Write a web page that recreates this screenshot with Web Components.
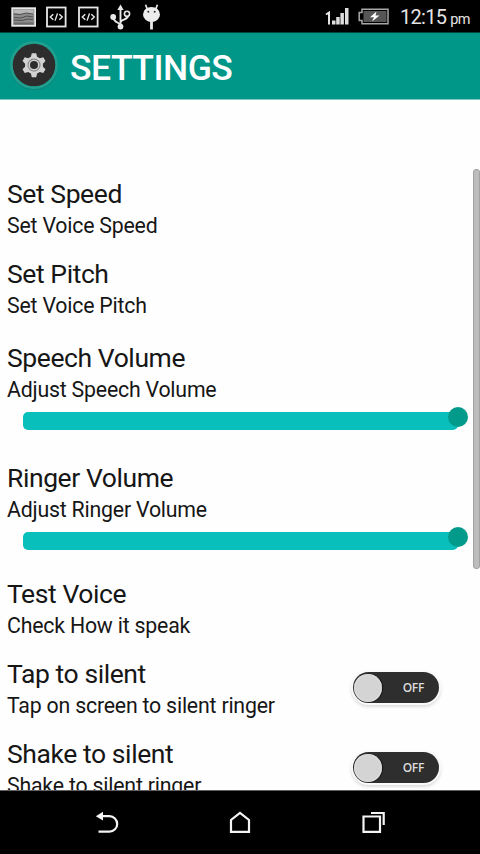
<!DOCTYPE html>
<html lang="en">
<head>
<meta charset="utf-8">
<title>Settings</title>
<style>
  body { margin: 0; background: #fff; font-family: Roboto, "Liberation Sans", sans-serif; }
</style>
</head>
<body>
<phone-screen>
  <status-bar slot="top"></status-bar>
  <title-bar slot="top">SETTINGS</title-bar>

  <setting-row><span slot="title">Set Speed</span>Set Voice Speed</setting-row>
  <setting-row class="before-slider"><span slot="title">Set Pitch</span>Set Voice Pitch</setting-row>
  <setting-row><span slot="title">Speech Volume</span>Adjust Speech Volume<volume-slider slot="below"></volume-slider></setting-row>
  <setting-row class="last-slider"><span slot="title">Ringer Volume</span>Adjust Ringer Volume<volume-slider slot="below"></volume-slider></setting-row>
  <setting-row><span slot="title">Test Voice</span>Check How it speak</setting-row>
  <setting-row><span slot="title">Tap to silent</span>Tap on screen to silent ringer<toggle-switch slot="control">OFF</toggle-switch></setting-row>
  <setting-row><span slot="title">Shake to silent</span>Shake to silent ringer<toggle-switch slot="control">OFF</toggle-switch></setting-row>

  <nav-bar slot="bottom"></nav-bar>
</phone-screen>

<script>
class PhoneScreen extends HTMLElement {
    constructor() {
        super();
        const shadowRoot = this.attachShadow({mode: 'open'});
        shadowRoot.innerHTML = `
            <style>
              :host { display: flex; flex-direction: column; width: 480px; height: 854px; overflow: hidden; background: #fefefe; }
              main { flex: 1; min-height: 0; display: flex; overflow: hidden; box-sizing: border-box; border-bottom: 1px solid #606060; }
              .list { width: 473px; padding-top: 77px; height: 700px; }
              .scroll { width: 5px; height: 398px; margin-top: 69px; border: 1px solid #a2a2a2; border-radius: 3px; background: #bdbdbd; }
              ::slotted(.before-slider) { margin-bottom: 4px; }
              ::slotted(.last-slider) { margin-bottom: -4px; }
            </style>
            <slot name="top"></slot>
            <main>
              <div class="list"><slot></slot></div>
              <div class="scroll"></div>
            </main>
            <slot name="bottom"></slot>`;
    }
}

class StatusBar extends HTMLElement {
    constructor() {
        super();
        const shadowRoot = this.attachShadow({mode: 'open'});
        shadowRoot.innerHTML = `
            <style>
              :host { display: flex; justify-content: space-between; height: 33px; box-sizing: border-box; background: #000; color: #e4e4e4; border-bottom: 1px solid #00453f; }
              svg { display: block; }
              .icons { display: flex; align-items: center; gap: 10px; padding: 1px 0 0 11px; }
              .state { display: flex; align-items: center; padding-right: 10px; }
              .time { font-size: 20px; line-height: 33px; letter-spacing: -.7px; padding: 4px 0 0 9px; white-space: nowrap; }
              .time small { font-size: 14.5px; letter-spacing: -.6px; margin-left: 4px; }
            </style>
            <div class="icons">
              <svg width="25" height="22" viewBox="0 0 25 22">
                <rect x="1.2" y="2.2" width="23" height="17.6" fill="#8c8c8c" stroke="#e8e8e8" stroke-width="1.8"/>
                <path d="M2.5 3.5h20v4.5l-7-1-6 1-7-1z" fill="#b8b8b8"/>
                <path d="M3 8l6 .5 6-1.500 7 1M3 11.500l7 .5 6-2 6 1M3 14l8 .5 6-1.500 5 .5" fill="none" stroke="#3c3c3c" stroke-width=".8"/>
                <path d="M3 17.500h19.500" stroke="#6a6a6a" stroke-width="2"/>
              </svg>
              <svg width="21" height="22" viewBox="0 0 21 22">
                <rect x="1" y="1.500" width="18.600" height="19" fill="none" stroke="#e8e8e8" stroke-width="1.800"/>
                <path d="M7.300 8.200L4.300 11l3 2.800M13.300 8.200l3 2.800-3 2.800M11.500 7.400l-2.400 7.200" fill="none" stroke="#e8e8e8" stroke-width="1.400"/>
              </svg>
              <svg width="21" height="22" viewBox="0 0 21 22" style="margin-left:1px">
                <rect x="1" y="1.500" width="18.600" height="19" fill="none" stroke="#e8e8e8" stroke-width="1.800"/>
                <path d="M7.300 8.200L4.300 11l3 2.800M13.300 8.200l3 2.800-3 2.800M11.500 7.400l-2.400 7.200" fill="none" stroke="#e8e8e8" stroke-width="1.400"/>
              </svg>
              <svg width="22" height="26" viewBox="0 0 22 26" style="margin-left:1px">
                <path d="M10.500 4v18M10.500 22c0-4-7-3-7-8.500M10.500 18.500c0-3.500 8-2.500 7.500-7" fill="none" stroke="#e8e8e8" stroke-width="1.900"/>
                <path d="M10.500 .5l3.200 5.500H7.300z" fill="#e8e8e8"/>
                <circle cx="10.500" cy="22.600" r="2.900" fill="#e8e8e8"/>
                <circle cx="3.200" cy="13" r="2.900" fill="#e8e8e8"/>
                <circle cx="17" cy="9.800" r="2.600" fill="#000" stroke="#e8e8e8" stroke-width="1.600"/>
              </svg>
              <svg width="20" height="26" viewBox="0 0 20 26">
                <path d="M5.200 5L3.600 .8M13.800 5l1.600-4.200" stroke="#e8e8e8" stroke-width="1.700"/>
                <ellipse cx="9.500" cy="10.400" rx="8.500" ry="7.500" fill="#ececec"/>
                <path d="M9.500 17v8.500" stroke="#e8e8e8" stroke-width="2.800"/>
                <circle cx="6.300" cy="7.800" r="1" fill="#333"/><circle cx="12.700" cy="7.800" r="1" fill="#333"/>
              </svg>
            </div>
            <div class="state">
              <svg width="66" height="20" viewBox="0 0 66 20">
                <path d="M1 8.500l3-2v12" fill="none" stroke="#e4e4e4" stroke-width="2"/>
                <path d="M7 14.500h3.500v4H7zM11.200 11h3.500v7.500h-3.500zM15.400 7h3.500v11.500h-3.500zM20 2h3.500v16.500H20z" fill="#dedede"/>
                <path d="M37 3.200h26v14.600H37v-3.300h-2.800V6.500H37z" fill="#000" stroke="#a8a8a8" stroke-width="1.500"/>
                <rect x="38.500" y="5" width="23" height="11" fill="#565656"/>
                <path d="M51.500 5.500L45 11.300h4l-2 4.200 7.500-6h-4z" fill="#fff"/>
              </svg>
              <div class="time">12:15<small>pm</small></div>
            </div>`;
    }
}

class TitleBar extends HTMLElement {
    constructor() {
        super();
        const shadowRoot = this.attachShadow({mode: 'open'});
        shadowRoot.innerHTML = `
            <style>
              :host { display: flex; align-items: center; height: 67px; box-sizing: border-box; padding-left: 8px; background: #019788; border-bottom: 1px solid #7fcbc3; color: #fff; font-size: 35.5px; font-weight: 500; letter-spacing: -.5px; }
              svg { display: block; margin: 0 11px 3px 0; }
              .label { padding-top: 4px; line-height: 42px; }
            </style>
            <svg width="51" height="52" viewBox="0 0 51 52">
              <circle cx="26" cy="27.500" r="24" fill="#078a7c"/>
              <circle cx="26" cy="26" r="24" fill="#1fa08f"/>
              <circle cx="26" cy="26" r="21.300" fill="#2d2d2d"/>
              <path d="M23.800 14.200h4.400l.9 3.600 2.700 1.500 3.500-1 2.200 3.800-2.600 2.600v3l2.600 2.600-2.200 3.800-3.500-1-2.700 1.500-.9 3.600h-4.400l-.9-3.600-2.700-1.500-3.500 1-2.200-3.800 2.600-2.600v-3l-2.600-2.600 2.200-3.800 3.500 1 2.700-1.500z" fill="#d2d2d2"/>
              <circle cx="26" cy="26" r="6.500" fill="#777"/>
              <circle cx="26" cy="26" r="5.600" fill="#d0d0d0"/>
              <circle cx="26" cy="26" r="4" fill="#2d2d2d"/>
            </svg>
            <div class="label"><slot></slot></div>`;
    }
}

class SettingRow extends HTMLElement {
    constructor() {
        super();
        const shadowRoot = this.attachShadow({mode: 'open'});
        shadowRoot.innerHTML = `
            <style>
              :host { display: block; padding: 0 0 17px 7px; color: #161616; }
              .row { display: flex; justify-content: space-between; height: 63px; }
              .title { font-size: 26.5px; line-height: 33px; letter-spacing: -.42px; }
              .sub { font-size: 21.3px; line-height: 32px; letter-spacing: -.2px; white-space: nowrap; }
            </style>
            <div class="row">
              <div>
                <div class="title"><slot name="title"></slot></div>
                <div class="sub"><slot></slot></div>
              </div>
              <slot name="control"></slot>
            </div>
            <slot name="below"></slot>`;
    }
}

class VolumeSlider extends HTMLElement {
    constructor() {
        super();
        const shadowRoot = this.attachShadow({mode: 'open'});
        shadowRoot.innerHTML = `
            <style>
              :host { display: block; height: 40px; }
              .track { position: relative; height: 18px; width: 435px; margin-left: 16px; border-radius: 5px; background: #09bfbc; }
              .wrap { padding-top: 8px; }
              .thumb { position: absolute; right: -10px; top: -5px; width: 20px; height: 20px; border-radius: 50%; background: #029b8b; }
            </style>
            <div class="wrap"><div class="track"><div class="thumb"></div></div></div>`;
    }
}

class ToggleSwitch extends HTMLElement {
    constructor() {
        super();
        const shadowRoot = this.attachShadow({mode: 'open'});
        shadowRoot.innerHTML = `
            <style>
              :host { display: flex; align-items: center; justify-content: space-between; box-sizing: border-box; width: 86px; height: 31px; margin: 15px 34px 0 0; padding: 0 15px 0 1px; border-radius: 16px; background: #2e2e2e; box-shadow: 0 0 0 2px #fafafa, 0 2px 3px 2px #ddd; color: #dcdcdc; font: 600 12px "Open Sans", sans-serif; letter-spacing: -.3px; }
              .knob { width: 28px; height: 28px; border-radius: 50%; background: #d4d4d4; box-shadow: inset 0 0 2px #f4f4f4, 1px 0 1px #111; }
            </style>
            <div class="knob"></div>
            <span><slot></slot></span>`;
    }
}

class NavBar extends HTMLElement {
    constructor() {
        super();
        const shadowRoot = this.attachShadow({mode: 'open'});
        shadowRoot.innerHTML = `
            <style>
              :host { display: grid; grid-template-columns: repeat(3, 133px); justify-content: center; justify-items: center; align-items: center; height: 63px; background: #000; }
              svg { display: block; fill: none; stroke: #f4f4f4; stroke-width: 2.2; }
            </style>
            <svg width="24" height="24" viewBox="0 0 24 24">
              <path d="M6 5.200h8.500a7.700 7.700 0 0 1 0 15.400H3.500"/>
              <path d="M.8 5.200L8 .8v8.800z" fill="#f4f4f4" stroke="none"/>
            </svg>
            <svg width="24" height="24" viewBox="0 0 24 24"><path d="M3 20.800V9L12 1.800l9 7.200v11.800z"/></svg>
            <svg width="24" height="24" viewBox="0 0 24 24"><path d="M2.500 5.500h16.500v15.300H2.500zM10 2h12.700v12"/></svg>`;
    }
}

customElements.define('phone-screen', PhoneScreen);
customElements.define('status-bar', StatusBar);
customElements.define('title-bar', TitleBar);
customElements.define('setting-row', SettingRow);
customElements.define('volume-slider', VolumeSlider);
customElements.define('toggle-switch', ToggleSwitch);
customElements.define('nav-bar', NavBar);
</script>
</body>
</html>
